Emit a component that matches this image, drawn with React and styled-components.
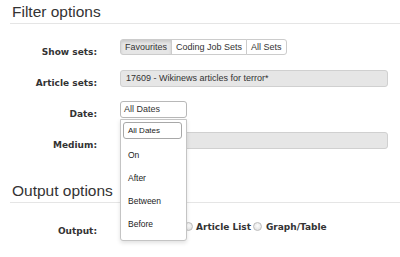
import React from 'react';
import styled, { createGlobalStyle } from 'styled-components';

const GlobalStyle = createGlobalStyle`
  html, body {
    margin: 0;
    padding: 0;
    background: #fff;
  }
  body {
    font-family: "Liberation Sans", Arial, sans-serif;
    color: #333;
  }
`;

const Page = styled.div`
  padding-left: 10px;
  width: 390px;
  height: 257px;
  overflow: hidden;
`;

const SectionTitle = styled.h3`
  border-bottom: 1px solid #e5e5e5;
  color: #333;
  font-family: "Liberation Sans", Arial, sans-serif;
  font-size: 15.5px;
  font-weight: normal;
  line-height: 20px;
  margin: ${props => (props.$first ? '0' : '16px 0 0')};
  padding: 2px 0 1px 2px;
`;

const Form = styled.div`
  margin-top: 15px;
`;

const Row = styled.div`
  align-items: flex-start;
  display: flex;
  gap: 23px;
  height: 31px;
`;

const Label = styled.label`
  color: #333;
  flex: 0 0 87px;
  font-family: "DejaVu Sans", Verdana, sans-serif;
  font-size: 9px;
  font-weight: bold;
  line-height: 17px;
  padding-top: 5px;
  text-align: right;
`;

const ButtonGroup = styled.div`
  display: flex;
`;

const GroupButton = styled.button`
  background: ${props => (props.$active ? '#e6e6e6' : '#fff')};
  border: 1px solid #ccc;
  box-shadow: ${props => (props.$active ? 'inset 0 2px 3px rgba(0,0,0,0.12)' : 'none')};
  color: #333;
  font-family: "Liberation Sans", Arial, sans-serif;
  font-size: 9px;
  height: 16px;
  line-height: 14px;
  margin-left: -1px;
  padding: 0 4px;

  &:first-child {
    border-radius: 3px 0 0 3px;
    margin-left: 0;
  }
  &:last-child {
    border-radius: 0 3px 3px 0;
  }
`;

const TextField = styled.div`
  background: #e6e6e6;
  border: 1px solid #d0d0d0;
  border-radius: 3px;
  box-sizing: border-box;
  color: #333;
  font-size: 9px;
  height: 17px;
  line-height: 15px;
  padding-left: 5px;
  width: 268px;
`;

const SelectWrap = styled.div`
  position: relative;
  z-index: 2;
`;

const Select = styled.div`
  background: #fff;
  border: 1px solid #b8b8b8;
  border-radius: 3px;
  box-sizing: border-box;
  color: #333;
  font-size: 9px;
  height: 17px;
  line-height: 15px;
  padding-left: 3px;
  width: 67px;
`;

const Menu = styled.ul`
  background: #fff;
  border: 1px solid #c4c4c4;
  border-radius: 0 0 3px 3px;
  box-shadow: 0 2px 4px rgba(0,0,0,0.12);
  box-sizing: border-box;
  left: 0;
  list-style: none;
  margin: 0;
  padding: 0 0 4px;
  position: absolute;
  top: 18px;
  width: 67px;
`;

const Option = styled.li`
  align-items: center;
  color: #222;
  display: flex;
  font-size: 8.5px;
  height: 23px;
  padding-left: 7px;
`;

const SelectedOption = styled.li`
  align-items: center;
  border: 1px solid #a8a8a8;
  border-radius: 3px;
  box-sizing: border-box;
  color: #222;
  display: flex;
  font-size: 8px;
  height: 17px;
  margin: 2px 4px 4.5px 2px;
  padding-left: 4px;
`;

const RadioGroup = styled.div`
  align-items: center;
  display: flex;
  height: 17px;
  padding-left: 63.5px;
`;

const RadioOption = styled.label`
  align-items: center;
  color: #333;
  display: flex;
  font-family: "DejaVu Sans", Verdana, sans-serif;
  font-size: 9px;
  font-weight: bold;
  gap: 3.5px;
  margin-right: 2.5px;
`;

const Radio = styled.input.attrs({ type: 'radio' })`
  appearance: none;
  background: radial-gradient(circle at 50% 40%, #fdfdfd 0%, #e2e2e2 80%);
  border: 1px solid #bdbdbd;
  border-radius: 50%;
  box-sizing: border-box;
  height: 9px;
  margin: 0;
  width: 9px;
`;

const dateOptions = ['On', 'After', 'Between', 'Before'];

export default function App() {
  return (
    <Page>
      <GlobalStyle />
      <SectionTitle $first>Filter options</SectionTitle>
      <Form>
        <Row>
          <Label>Show sets:</Label>
          <ButtonGroup>
            <GroupButton $active>Favourites</GroupButton>
            <GroupButton>Coding Job Sets</GroupButton>
            <GroupButton>All Sets</GroupButton>
          </ButtonGroup>
        </Row>
        <Row>
          <Label>Article sets:</Label>
          <TextField>17609 - Wikinews articles for terror*</TextField>
        </Row>
        <Row>
          <Label>Date:</Label>
          <SelectWrap>
            <Select>All Dates</Select>
            <Menu>
              <SelectedOption>All Dates</SelectedOption>
              {dateOptions.map(option => (
                <Option key={option}>{option}</Option>
              ))}
            </Menu>
          </SelectWrap>
        </Row>
        <Row>
          <Label>Medium:</Label>
          <TextField />
        </Row>
      </Form>
      <SectionTitle>Output options</SectionTitle>
      <Form>
        <Row>
          <Label>Output:</Label>
          <RadioGroup>
            <RadioOption><Radio name="output" />Article List</RadioOption>
            <RadioOption><Radio name="output" />Graph/Table</RadioOption>
          </RadioGroup>
        </Row>
      </Form>
    </Page>
  );
}
